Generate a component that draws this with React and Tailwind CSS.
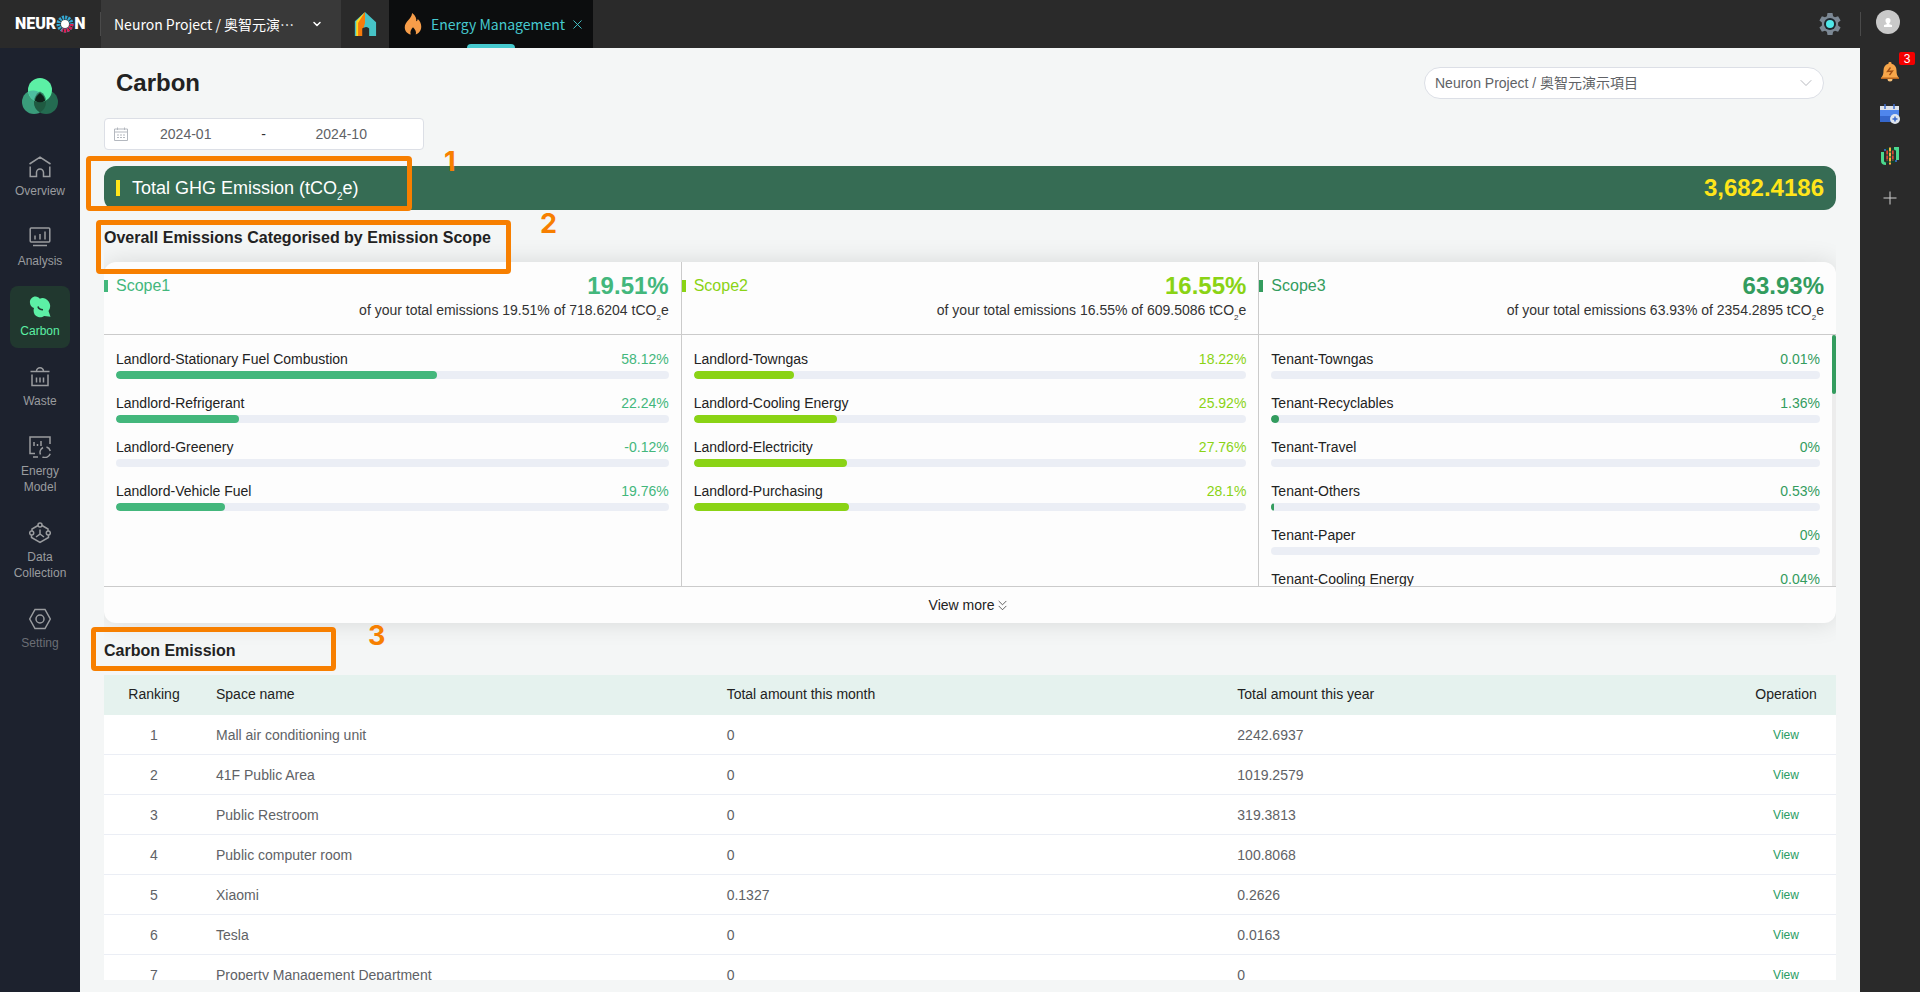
import { ChevronDown, ChevronsDown, X } from "lucide-react";

const NAV_ITEMS = [
  { label: "Overview", icon: OverviewIcon },
  { label: "Analysis", icon: AnalysisIcon },
  { label: "Carbon", icon: CarbonIcon, active: true },
  { label: "Waste", icon: WasteIcon },
  { label: "Energy Model", icon: EnergyModelIcon },
  { label: "Data Collection", icon: DataIcon },
  { label: "Setting", icon: SettingIcon, dim: true },
];

const SCOPES = [
  {
    name: "Scope1",
    percent: "19.51%",
    total: "718.6204",
    text: "text-[#43b77c]",
    bg: "bg-[#43b77c]",
    items: [
      ["Landlord-Stationary Fuel Combustion", 58.12],
      ["Landlord-Refrigerant", 22.24],
      ["Landlord-Greenery", -0.12],
      ["Landlord-Vehicle Fuel", 19.76],
    ],
  },
  {
    name: "Scope2",
    percent: "16.55%",
    total: "609.5086",
    text: "text-[#8ad315]",
    bg: "bg-[#8ad315]",
    items: [
      ["Landlord-Towngas", 18.22],
      ["Landlord-Cooling Energy", 25.92],
      ["Landlord-Electricity", 27.76],
      ["Landlord-Purchasing", 28.1],
    ],
  },
  {
    name: "Scope3",
    percent: "63.93%",
    total: "2354.2895",
    text: "text-[#339c5e]",
    bg: "bg-[#339c5e]",
    scroll: true,
    items: [
      ["Tenant-Towngas", 0.01],
      ["Tenant-Recyclables", 1.36],
      ["Tenant-Travel", 0],
      ["Tenant-Others", 0.53],
      ["Tenant-Paper", 0],
      ["Tenant-Cooling Energy", 0.04],
    ],
  },
];

const ROWS = [
  ["Mall air conditioning unit", "0", "2242.6937"],
  ["41F Public Area", "0", "1019.2579"],
  ["Public Restroom", "0", "319.3813"],
  ["Public computer room", "0", "100.8068"],
  ["Xiaomi", "0.1327", "0.2626"],
  ["Tesla", "0", "0.0163"],
  ["Property Management Department", "0", "0"],
];

function LineIcon({ children }) {
  return (
    <svg width="22" height="22" viewBox="0 0 22 22" fill="none" stroke="currentColor" strokeWidth="1.5">
      {children}
    </svg>
  );
}

function OverviewIcon() {
  return (
    <LineIcon>
      <path d="M0.5 8 11 1.2 21.5 8M1.2 10.5V20.4H7.5V16.5a3.5 3.5 0 0 1 7 0V20.4H20.8V10.5" />
    </LineIcon>
  );
}

function AnalysisIcon() {
  return (
    <LineIcon>
      <rect x="1.2" y="2" width="19.6" height="14" rx="1" />
      <path d="M6 9.5V13.5M11 8V13.5M16 5.5V13.5M4 19.5H18" />
    </LineIcon>
  );
}

function CarbonIcon() {
  return (
    <svg width="22" height="22" viewBox="0 0 22 22">
      <path
        fill="currentColor"
        d="M6.5.6c2 0 3.3 1 4.3 2.2 1.5-.9 3.8-1 5.7 0 2.6 1.3 4.2 3.8 4.6 6.3.4 2.5-.7 4.6-1.6 6l2 5.7-6.3-.9c-1.6 1-3.8 1.7-6 1-3-.8-4.6-3.2-4.6-6.2 0-1 .1-1.8.4-2.6C2.6 11.2.9 9 .9 6.2.9 3.1 3.4.6 6.5.6Z"
      />
      <path d="M9 10.5c.5 2 2.200 3.200 5 3.200" fill="none" stroke="#21382f" strokeWidth="1.6" />
    </svg>
  );
}

function WasteIcon() {
  return (
    <LineIcon>
      <path d="M1.5 5.5H20.5M3 8.5V19.4H19V8.5M7.5 5.3a3.5 3.5 0 0 1 7 0M7.5 11.5V16.5M11 11.5V16.5M14.5 11.5V16.5" />
    </LineIcon>
  );
}

function EnergyModelIcon() {
  return (
    <LineIcon>
      <path d="M21 8V1H1V17.5H6M5 6V10M8.5 8V10M12 5V10M4 21H9" />
      <path d="M14 11.500a5.500 5.500 0 0 0-2.500 7M17.500 11a5.500 5.500 0 0 1 3.800 4M21.200 17.800a5.500 5.500 0 0 1-7.700 3.200" />
    </LineIcon>
  );
}

function DataIcon() {
  return (
    <LineIcon>
      <path d="M9 3.5 3 7V9M13 3.5 19 7V9M2.5 13V15.5L11 20.5 19.5 15.5V13M11 7.5V12L7 15M11 12 15 15" />
      <circle cx="11" cy="3" r="2" />
      <circle cx="2.7" cy="11" r="2" />
      <circle cx="19.3" cy="11" r="2" />
    </LineIcon>
  );
}

function SettingIcon() {
  return (
    <LineIcon>
      <path d="M6 1.5H16L21.3 11 16 20.5H6L.7 11Z" />
      <circle cx="11" cy="11" r="4" />
    </LineIcon>
  );
}

function NeuronLogo() {
  return (
    <a
      href="#"
      aria-label="Neuron"
      className="flex items-center font-['Roboto',sans-serif] text-base leading-6 font-black text-white"
    >
      <span>NEUR</span>
      <svg width="18" height="18" viewBox="0 0 18 18" fill="none" strokeWidth="4">
        <circle cx="9" cy="9" r="6.5" stroke="#35a9d4" strokeDasharray="2 1" />
        <path d="M15.5 9A6.500 6.500 0 0 1 6 14.800" stroke="#e2194f" strokeDasharray="2 1" />
        <circle cx="9" cy="9" r="4" fill="#fff" />
      </svg>
      <span>N</span>
    </a>
  );
}

function HomeIcon() {
  return (
    <svg width="24" height="24" viewBox="0 0 24 26">
      <path fill="#46c3c6" d="M1 10 12 0 4 14V26H1Z" />
      <path fill="#ffd91c" d="M2.5 10 12 0 6 12V26H2.500Z" />
      <path fill="#f77b0b" d="M4.500 12 12 0V16L9 18V26H4.500Z" />
      <path fill="#46c3c6" d="M12 0 24 11V26H16.500V18q-2-3-6-1L12 12Z" />
    </svg>
  );
}

function FlameIcon() {
  return (
    <svg className="shrink-0" width="18" height="22" viewBox="0 0 18 24" fill="#f79d49">
      <path d="M8 0c4 3 5 6 4.500 9 1-.4 1.500-1.300 1.700-2.500C17 9 18 12 18 15c0 4.500-3 7.500-6 8.500 1-3-.5-5.500-3-8-2 2-3.500 4.500-2.500 8C2.500 22.500 0 19.500 0 15.500 0 9 7.500 7 8 0Z" />
    </svg>
  );
}

function GearIcon() {
  return (
    <svg width="22" height="22" viewBox="0 0 22 22">
      <path
        fill="#7c8894"
        d="M8.500 0h5l.6 3.200 1.900 1.100 3.100-1.100 2.500 4.300-2.500 2.100v2.800l2.500 2.100-2.500 4.300-3.100-1.100-1.900 1.100-.6 3.200h-5l-.6-3.200L6 17.700l-3.100 1.100L.4 14.500l2.500-2.100V9.600L.4 7.500l2.500-4.300L6 4.300l1.900-1.100Z"
      />
      <circle cx="11" cy="11" r="6" fill="#1c252c" />
      <circle cx="11" cy="11" r="4" fill="#4fe8ea" />
    </svg>
  );
}

function Topbar() {
  return (
    <header className="flex h-12 shrink-0 items-stretch bg-[#2a2a2a] font-['Noto_Sans_CJK_TC',sans-serif] text-sm">
      <div className="flex w-[101px] items-center pl-[15px]">
        <NeuronLogo />
        <span className="ml-auto h-6 w-px bg-[#4a4a4a]" />
      </div>
      <button className="flex w-60 items-center bg-[#393939] pr-[18px] pl-[13px] text-left text-white">
        <span className="flex-1 whitespace-nowrap">Neuron Project / 奥智元演⋯</span>
        <ChevronDown size={12} strokeWidth={3} />
      </button>
      <a href="#" aria-label="Home" className="flex w-12 items-center justify-center">
        <HomeIcon />
      </a>
      <div className="relative flex w-[204px] items-center bg-[#0c0d0e] pl-[15px] text-[#46c9ce]">
        <FlameIcon />
        <a href="#" className="ml-[9px] whitespace-nowrap">Energy Management</a>
        <button aria-label="Close tab" className="ml-[5px]"><X size={15} strokeWidth={1.5} /></button>
        <span className="absolute bottom-0 left-1/2 h-1 w-12 -translate-x-1/2 rounded-t bg-[#46c9ce]" />
      </div>
      <div className="ml-auto flex items-center">
        <button aria-label="System settings" className="mr-[19px]"><GearIcon /></button>
        <span className="h-6 w-px bg-[#4a4a4a]" />
        <button aria-label="Account" className="mr-5 mb-1 ml-[15px]">
          <svg width="24" height="24" viewBox="0 0 24 24">
            <circle cx="12" cy="12" r="12" fill="#c9c9c9" />
            <path fill="#fff" d="M12 8a2.500 2.500 0 0 1 2.500 2.700c0 1.200-.6 2-1.200 2.600v1l2.700.8V17H8v-1.900l2.700-.8v-1c-.6-.6-1.200-1.400-1.200-2.600A2.500 2.500 0 0 1 12 8Z" />
          </svg>
        </button>
      </div>
    </header>
  );
}

function Sidebar() {
  return (
    <aside className="w-20 shrink-0 bg-[#1d222e]">
      <svg className="mx-auto mt-[30px]" width="36" height="36" viewBox="0 0 36 36">
        <circle cx="12" cy="24" r="12" fill="#3a9c7b" />
        <circle cx="24" cy="24" r="12" fill="#246b51" />
        <path fill="#1f5a41" d="M18 13.600A12 12 0 0 1 18 34.400A12 12 0 0 1 18 13.600Z" />
        <circle cx="18" cy="12" r="12" fill="#5cf0a5" />
        <path fill="#4dbfa0" d="M6.300 13.500A12 12 0 0 1 23 23A12 12 0 0 1 6.300 13.500Z" />
        <path fill="#2f7a5f" d="M12.200 22.500Q12.500 17 18 13.600Q24 17 23.800 22.500Q18 25.500 12.200 22.500Z" />
        <path fill="#0f211a" d="M18 15Q22.500 18 23 23Q18 25.500 13 23Q13.500 18 18 15Z" />
      </svg>
      <nav className="mt-8 flex flex-col items-center gap-2">
        {NAV_ITEMS.map(({ label, icon: Icon, active, dim }) => (
          <a
            key={label}
            href="#"
            className={`flex w-[60px] flex-col items-center gap-[5px] rounded-lg pt-2.5 pb-[9px] text-center text-xs leading-4 ${
              active ? "bg-[#21382f] text-[#5cf0a5]" : "text-[#9a9c9f]"
            }`}
          >
            <Icon />
            <span className={dim ? "text-[#6b6e75]" : ""}>{label}</span>
          </a>
        ))}
      </nav>
    </aside>
  );
}

function RightRail() {
  return (
    <aside className="flex w-[60px] shrink-0 flex-col items-center bg-[#2a2a2a]">
      <button aria-label="Alerts, 3 new" className="relative mt-3.5">
        <svg width="20" height="20" viewBox="0 0 20 20">
          <path fill="#f7a64a" d="M10 0a1.500 1.500 0 0 1 1.500 1.800C14.500 2.500 16.500 5 16.500 8.500c0 4 .8 5.500 2.500 7.500H1c1.700-2 2.500-3.500 2.500-7.500C3.500 5 5.500 2.500 8.500 1.800A1.500 1.500 0 0 1 10 0Z" />
          <path fill="#b9661f" d="M1 15.500h18v1.500H1Z" />
          <path fill="#f7c27a" d="M7.500 17h5a2.500 2.500 0 0 1-5 0Z" />
          <path fill="none" stroke="#a14f14" strokeWidth="1.3" d="M10.500 5.500 7.500 9.500 12.500 9 9.500 13" />
        </svg>
        <span className="absolute -top-2.5 left-[19px] h-[13px] w-4 rounded-xs bg-[#f40000] text-center text-xs leading-[14px] text-white">3</span>
      </button>
      <button aria-label="Calendar" className="mt-[22px]">
        <svg width="20" height="20" viewBox="0 0 20 20">
          <path fill="#4f86ec" d="M0 2h19v16H0Z" />
          <path fill="#3567cc" d="M0 12h19v6H0Z" />
          <path fill="#dfe3ea" d="M0 2h19v4H0Z" />
          <path stroke="#3f6fd0" strokeWidth="1.5" d="M5 0v5M14 0v5" />
          <circle cx="15" cy="15" r="5" fill="#dfe5ee" />
          <path stroke="#3765c9" strokeWidth="1.5" d="M12.500 15h5M15 12.500v5" />
        </svg>
      </button>
      <button aria-label="Integrations" className="mt-[22px]">
        <svg width="20" height="20" viewBox="0 0 20 20">
          <path fill="#12402c" d="M6 2h9v15H6Z" />
          <path fill="#4bd98e" d="M1 6h3v9q0 1 2 1.500V19q-5 0-5-4ZM19 14h-3V5q0-1-2-1.500V1h5Z" />
          <path stroke="#e0433a" strokeWidth="1.800" strokeDasharray="4 1" d="M7.200 4.500v10.500M12.800 4.500v10.500" />
          <path stroke="#f6b73c" strokeWidth="2" strokeDasharray="4 1" d="M10 1.500v17" />
          <path stroke="#3a7be0" strokeWidth="1.5" d="M4 4h2M15 15h2" />
        </svg>
      </button>
      <button aria-label="Add" className="mt-[25px]">
        <svg width="14" height="14" viewBox="0 0 14 14" stroke="#d0d0d0"><path d="M7 .5v13M.5 7h13" /></svg>
      </button>
    </aside>
  );
}

function Marker({ box, number, children }) {
  return (
    <>
      <span className={`pointer-events-none absolute z-10 rounded-sm border-[5px] border-[#f77f00] ${box}`} />
      <span className={`pointer-events-none absolute z-10 font-['Inter',sans-serif] text-[27px] leading-5 font-bold text-[#f77f00] ${number}`}>
        {children}
      </span>
    </>
  );
}

function ScopeColumn({ scope }) {
  return (
    <section className="flex min-w-0 flex-1 flex-col border-r border-[#cbcbcb] last:border-r-0">
      <div className="h-[73px] border-b border-[#cbcbcb] pt-3 pr-3 text-right">
        <div className="flex h-6 items-center">
          <span className={`h-3 w-1 ${scope.bg}`} />
          <h3 className={`ml-2 text-base ${scope.text}`}>{scope.name}</h3>
          <strong className={`ml-auto text-2xl ${scope.text}`}>{scope.percent}</strong>
        </div>
        <p className="text-sm leading-6 text-[#333]">
          of your total emissions {scope.percent} of {scope.total} tCO<sub className="-bottom-[5px] text-[8px]">2</sub>e
        </p>
      </div>
      <div className="flex h-[251px] overflow-hidden">
        <ul className="flex-1 px-3 pt-3.5">
          {scope.items.map(([name, value]) => (
            <li key={name} className="h-11">
              <div className="flex justify-between pb-0.5 text-sm leading-5">
                <span className="text-[#222]">{name}</span>
                <span className={scope.text}>{value}%</span>
              </div>
              <div className="h-2 overflow-hidden rounded-full bg-[#ebeef5]">
                <div className={`h-2 rounded-full ${scope.bg}`} style={{ width: `${Math.max(value, 0)}%` }} />
              </div>
            </li>
          ))}
        </ul>
        {scope.scroll && (
          <div className="w-1 bg-[#ececec]">
            <div className={`h-[59px] rounded-xs ${scope.bg}`} />
          </div>
        )}
      </div>
    </section>
  );
}

function EmissionTable() {
  return (
    <div className="min-h-0 flex-1 overflow-hidden">
      <table className="w-full table-fixed border-separate border-spacing-0 text-left text-sm">
        <thead className="bg-[#e5f2ee] text-[#222]">
          <tr className="h-10">
            <th className="w-[100px] pb-0.5 text-center font-normal">Ranking</th>
            <th className="px-3 pb-0.5 font-normal">Space name</th>
            <th className="px-3 pb-0.5 font-normal">Total amount this month</th>
            <th className="px-3 pb-0.5 font-normal">Total amount this year</th>
            <th className="w-[100px] pb-0.5 text-center font-normal">Operation</th>
          </tr>
        </thead>
        <tbody className="bg-white text-[#606266]">
          {ROWS.map(([name, month, year], i) => (
            <tr key={name} className="h-10 *:border-b *:border-[#ebeef5]">
              <td className="text-center">{i + 1}</td>
              <td className="px-3">{name}</td>
              <td className="px-3">{month}</td>
              <td className="px-3">{year}</td>
              <td className="text-center text-xs">
                <a href="#" className="text-[#2a9c63]">View</a>
              </td>
            </tr>
          ))}
        </tbody>
      </table>
    </div>
  );
}

function Filters() {
  return (
    <>
      <div className="flex items-center justify-between px-3 pt-[19px]">
        <h1 className="text-2xl font-bold text-[#222]">Carbon</h1>
        <div className="relative flex w-[400px] items-center">
          <select
            aria-label="Project"
            className="h-8 w-full appearance-none rounded-full border border-[#dcdfe6] bg-white pl-2.5 text-sm text-[#606266]"
          >
            <option>Neuron Project / 奥智元演示項目</option>
          </select>
          <ChevronDown size={20} strokeWidth={1} className="pointer-events-none absolute right-2 text-[#a8abb2]" />
        </div>
      </div>
      <div className="mt-[19px] flex h-8 w-80 items-center rounded-sm border border-[#dcdfe6] bg-white pr-6 pl-[9px] text-sm text-[#606266]">
        <svg width="14" height="14" viewBox="0 0 14 14" fill="none" stroke="#b4b8bf">
          <path d="M.5 2H13.500V13.500H.5ZM.5 5H13.500M3.500.5V3M10.500.5V3M3 8h2M6 8h2M9 8h2M3 10.500h2M6 10.500h2M9 10.500h2" />
        </svg>
        <input aria-label="Start month" defaultValue="2024-01" className="w-0 flex-1 text-center" />
        <span className="w-10 text-center text-[#303133]">-</span>
        <input aria-label="End month" defaultValue="2024-10" className="w-0 flex-1 text-center" />
      </div>
    </>
  );
}

export default function App() {
  return (
    <div className="flex h-screen flex-col overflow-hidden font-['Liberation_Sans','Noto_Sans_CJK_TC',sans-serif]">
      <Topbar />
      <div className="flex min-h-0 flex-1">
        <Sidebar />
        <main className="flex min-w-0 flex-1 flex-col bg-[#f4f6f6] px-6 pb-3">
          <Filters />

          <div className="relative mt-4 flex h-11 shrink-0 items-center rounded-xl bg-[#366c54] px-3">
            <span className="h-4 w-1 bg-[#ffe51a]" />
            <h2 className="ml-3 text-lg text-white">
              Total GHG Emission (tCO<sub className="-bottom-1.5 text-[10px]">2</sub>e)
            </h2>
            <strong className="ml-auto text-2xl text-[#ffe51a]">3,682.4186</strong>
            <Marker box="-top-2.5 -left-[18px] h-[55px] w-[326px]" number="-top-3.5 left-[340px]">1</Marker>
          </div>

          <div className="relative flex h-[52px] shrink-0 items-start pt-4">
            <h2 className="text-base font-bold text-[#222]">Overall Emissions Categorised by Emission Scope</h2>
            <Marker box="top-2.5 -left-2 h-[54px] w-[415px]" number="top-1 left-[436px]">2</Marker>
          </div>

          <div className="shrink-0 overflow-x-clip">
            <div className="rounded-xl bg-[#fdfdfd] shadow-[0_0_24px_rgba(0,0,0,0.12)]">
              <div className="flex border-b border-[#cbcbcb]">
                {SCOPES.map((scope) => (
                  <ScopeColumn key={scope.name} scope={scope} />
                ))}
              </div>
              <button className="flex h-9 w-full items-center justify-center text-sm text-[#222]">
                View more <ChevronsDown size={17} strokeWidth={1} />
              </button>
            </div>
          </div>

          <div className="relative flex h-[52px] shrink-0 items-start pt-4">
            <h2 className="text-base font-bold text-[#222]">Carbon Emission</h2>
            <Marker box="top-1 -left-[13px] h-11 w-[245px]" number="top-[3px] left-[264px]">3</Marker>
          </div>
          <EmissionTable />
        </main>
        <RightRail />
      </div>
    </div>
  );
}
